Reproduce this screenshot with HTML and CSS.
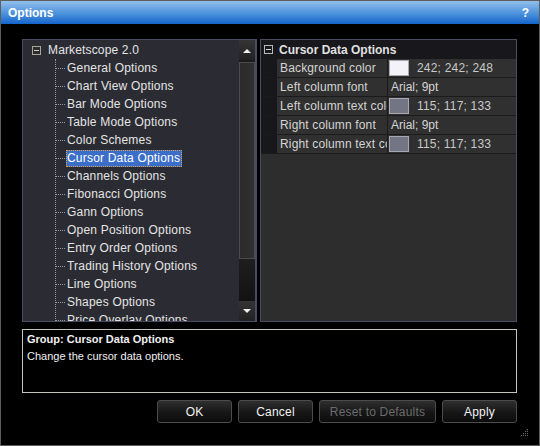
FILE: index.html
```html
<!DOCTYPE html>
<html>
<head>
<meta charset="utf-8">
<title>Options</title>
<link rel="stylesheet" href="styles.css">
</head>
<body>
<div class="window">
  <div class="titlebar">
    <span class="title">Options</span>
    <span class="help">?</span>
  </div>
  <div class="main">
    <div class="panes">
      <div class="tree">
        <div class="tree-list">
          <div class="root-row"><span class="minus"></span><span class="root-label">Marketscope 2.0</span></div>
          <div class="children">
            <div class="child"><span class="tick"></span><span class="label">General Options</span></div>
            <div class="child"><span class="tick"></span><span class="label">Chart View Options</span></div>
            <div class="child"><span class="tick"></span><span class="label">Bar Mode Options</span></div>
            <div class="child"><span class="tick"></span><span class="label">Table Mode Options</span></div>
            <div class="child"><span class="tick"></span><span class="label">Color Schemes</span></div>
            <div class="child"><span class="tick"></span><span class="label selected">Cursor Data Options</span></div>
            <div class="child"><span class="tick"></span><span class="label">Channels Options</span></div>
            <div class="child"><span class="tick"></span><span class="label">Fibonacci Options</span></div>
            <div class="child"><span class="tick"></span><span class="label">Gann Options</span></div>
            <div class="child"><span class="tick"></span><span class="label">Open Position Options</span></div>
            <div class="child"><span class="tick"></span><span class="label">Entry Order Options</span></div>
            <div class="child"><span class="tick"></span><span class="label">Trading History Options</span></div>
            <div class="child"><span class="tick"></span><span class="label">Line Options</span></div>
            <div class="child"><span class="tick"></span><span class="label">Shapes Options</span></div>
            <div class="child"><span class="tick"></span><span class="label">Price Overlay Options</span></div>
          </div>
        </div>
        <div class="scrollbar">
          <div class="sb-btn"><svg width="8" height="5" viewBox="0 0 8 5"><path d="M0 5 L4 1 L8 5 Z" fill="#f0f0f0"/></svg></div>
          <div class="sb-thumb"></div>
          <div class="sb-track"></div>
          <div class="sb-btn"><svg width="8" height="5" viewBox="0 0 8 5"><path d="M0 0 L4 4 L8 0 Z" fill="#f0f0f0"/></svg></div>
        </div>
      </div>
      <div class="props">
        <div class="props-head"><span class="minus light"></span><span class="head-label">Cursor Data Options</span></div>
        <div class="prop-row">
          <div class="gutter"></div>
          <div class="name">Background color</div>
          <div class="value"><span class="swatch" style="background:#f2f2f8"></span><span class="vtext">242; 242; 248</span></div>
        </div>
        <div class="prop-row">
          <div class="gutter"></div>
          <div class="name">Left column font</div>
          <div class="value"><span class="ftext">Arial; 9pt</span></div>
        </div>
        <div class="prop-row">
          <div class="gutter"></div>
          <div class="name">Left column text color</div>
          <div class="value"><span class="swatch" style="background:#737585"></span><span class="vtext">115; 117; 133</span></div>
        </div>
        <div class="prop-row">
          <div class="gutter"></div>
          <div class="name">Right column font</div>
          <div class="value"><span class="ftext">Arial; 9pt</span></div>
        </div>
        <div class="prop-row">
          <div class="gutter"></div>
          <div class="name">Right column text color</div>
          <div class="value"><span class="swatch" style="background:#737585"></span><span class="vtext">115; 117; 133</span></div>
        </div>
      </div>
    </div>
    <div class="desc">
      <div class="desc-title">Group: Cursor Data Options</div>
      <div class="desc-text">Change the cursor data options.</div>
    </div>
    <div class="buttons">
      <button class="btn">OK</button>
      <button class="btn">Cancel</button>
      <button class="btn wide" disabled>Reset to Defaults</button>
      <button class="btn">Apply</button>
    </div>
  </div>
  <svg class="grip" width="9" height="9" viewBox="0 0 9 9">
    <g fill="#6a6a6a">
      <rect x="7" y="1" width="1" height="1"/>
      <rect x="5" y="3" width="1" height="1"/><rect x="7" y="3" width="1" height="1"/>
      <rect x="3" y="5" width="1" height="1"/><rect x="5" y="5" width="1" height="1"/><rect x="7" y="5" width="1" height="1"/>
      <rect x="1" y="7" width="1" height="1"/><rect x="3" y="7" width="1" height="1"/><rect x="5" y="7" width="1" height="1"/><rect x="7" y="7" width="1" height="1"/>
    </g>
  </svg>
</div>
</body>
</html>
```
FILE: styles.css
```css
html, body {
  margin: 0;
  padding: 0;
  background: #000;
}

.window {
  position: relative;
  width: 540px;
  height: 446px;
  box-sizing: border-box;
  border: 1px solid #5e5e5e;
  background: #000;
  display: flex;
  flex-direction: column;
  font-family: "Liberation Sans", Arial, sans-serif;
  font-size: 12px;
  color: #e4e4e4;
  overflow: hidden;
}

.titlebar {
  flex: none;
  height: 23px;
  display: flex;
  align-items: center;
  justify-content: space-between;
  padding: 0 10px 0 7px;
  background: linear-gradient(#92bfeb, #4b91dc 55%, #1464cb);
  color: #fff;
  font-weight: bold;
}

.title {
  font-size: 12px;
}

.help {
  font-size: 12px;
}

.main {
  flex: 1;
  display: flex;
  flex-direction: column;
  padding: 15px 22px 0 21px;
}

.panes {
  display: flex;
  gap: 3px;
  height: 283px;
}

.tree {
  width: 235px;
  box-sizing: border-box;
  border: 1px solid #4a4d62;
  border-right-width: 2px;
  background: #2b2c33;
  display: flex;
  overflow: hidden;
}

.tree-list {
  flex: 1;
  overflow: hidden;
  padding: 1px 0 0 9px;
}

.root-row {
  height: 18px;
  display: flex;
  align-items: center;
  gap: 7px;
  line-height: 18px;
}

.minus {
  flex: none;
  width: 9px;
  height: 9px;
  box-sizing: border-box;
  border: 1px solid #a9a696;
  display: flex;
  align-items: center;
  justify-content: center;
}

.minus::after {
  content: "";
  width: 5px;
  height: 1px;
  background: #d0cdbd;
}

.minus.light {
  border-color: #b8b8b8;
}

.minus.light::after {
  background: #d8d8d8;
}

.root-label {
  letter-spacing: 0.15px;
}

.children {
  margin-left: 23px;
  border-left: 1px dotted #9a9a9a;
}

.child {
  height: 18px;
  display: flex;
  align-items: center;
  line-height: 17px;
  white-space: nowrap;
}

.tick {
  flex: none;
  width: 9px;
  border-top: 1px dotted #9a9a9a;
  margin-right: 1px;
}

.label {
  padding: 0 2px 0 1px;
  letter-spacing: 0.2px;
}

.label.selected {
  background: #3a6ec9;
  color: #fff;
  outline: 1px dotted #e0a040;
  outline-offset: -1px;
  height: 17px;
}

.scrollbar {
  flex: none;
  width: 16px;
  display: flex;
  flex-direction: column;
  background: #1a1a1a;
}

.sb-btn {
  flex: none;
  height: 20px;
  display: flex;
  align-items: center;
  justify-content: center;
  background: linear-gradient(#343434, #222);
}

.sb-thumb {
  flex: none;
  height: 197px;
  margin-top: 2px;
  box-sizing: border-box;
  border: 1px solid #4c4c4c;
  background: linear-gradient(90deg, #2a2a2a, #303030);
}

.sb-track {
  flex: 1;
  background: linear-gradient(#1e1e1e, #121212);
}

.props {
  flex: 1;
  box-sizing: border-box;
  border: 1px solid #4a4d62;
  background: #2d2d2d;
  display: flex;
  flex-direction: column;
  overflow: hidden;
}

.props-head {
  flex: none;
  height: 19px;
  display: flex;
  align-items: center;
  gap: 6px;
  padding-left: 3px;
  background: #17171c;
}

.head-label {
  font-weight: bold;
  color: #e0e0e0;
}

.prop-row {
  flex: none;
  height: 19px;
  box-sizing: border-box;
  border-bottom: 1px solid #1b1b1e;
  display: flex;
}

.gutter {
  flex: none;
  width: 16px;
  background: #17171c;
}

.name {
  flex: none;
  width: 111px;
  box-sizing: border-box;
  border-right: 1px solid #1b1b1e;
  background: #303030;
  padding-left: 3px;
  line-height: 19px;
  white-space: nowrap;
  overflow: hidden;
  color: #d4d4d4;
  letter-spacing: 0.15px;
}

.value {
  flex: 1;
  display: flex;
  align-items: center;
  background: #303030;
  color: #d4d4d4;
  white-space: nowrap;
}

.swatch {
  flex: none;
  width: 20px;
  height: 16px;
  box-sizing: border-box;
  border: 1px solid #a8a8b0;
  margin-left: 1px;
}

.vtext {
  margin-left: 8px;
  color: #c8c8c8;
  letter-spacing: 0.2px;
}

.ftext {
  margin-left: 3px;
  color: #d4d4d4;
}

.desc {
  margin-top: 7px;
  height: 64px;
  box-sizing: border-box;
  border: 1px solid #c4c4bc;
  padding: 1px 4px;
  font-size: 11px;
  line-height: 17px;
  color: #f0f0f0;
}

.desc-title {
  font-weight: bold;
}

.buttons {
  margin-top: 7px;
  display: flex;
  justify-content: flex-end;
  gap: 6px;
}

.btn {
  width: 75px;
  height: 23px;
  box-sizing: border-box;
  border: 1px solid #4c4c4c;
  border-radius: 3px;
  background: linear-gradient(#2f2f2f, #161616 55%, #0c0c0c);
  color: #f2f2f2;
  font-family: "Liberation Sans", Arial, sans-serif;
  font-size: 12px;
  padding: 0;
  letter-spacing: 0.2px;
}

.btn.wide {
  width: 117px;
}

.btn:disabled {
  color: #6c6c6c;
}

.grip {
  position: absolute;
  right: 10px;
  bottom: 8px;
}
```
